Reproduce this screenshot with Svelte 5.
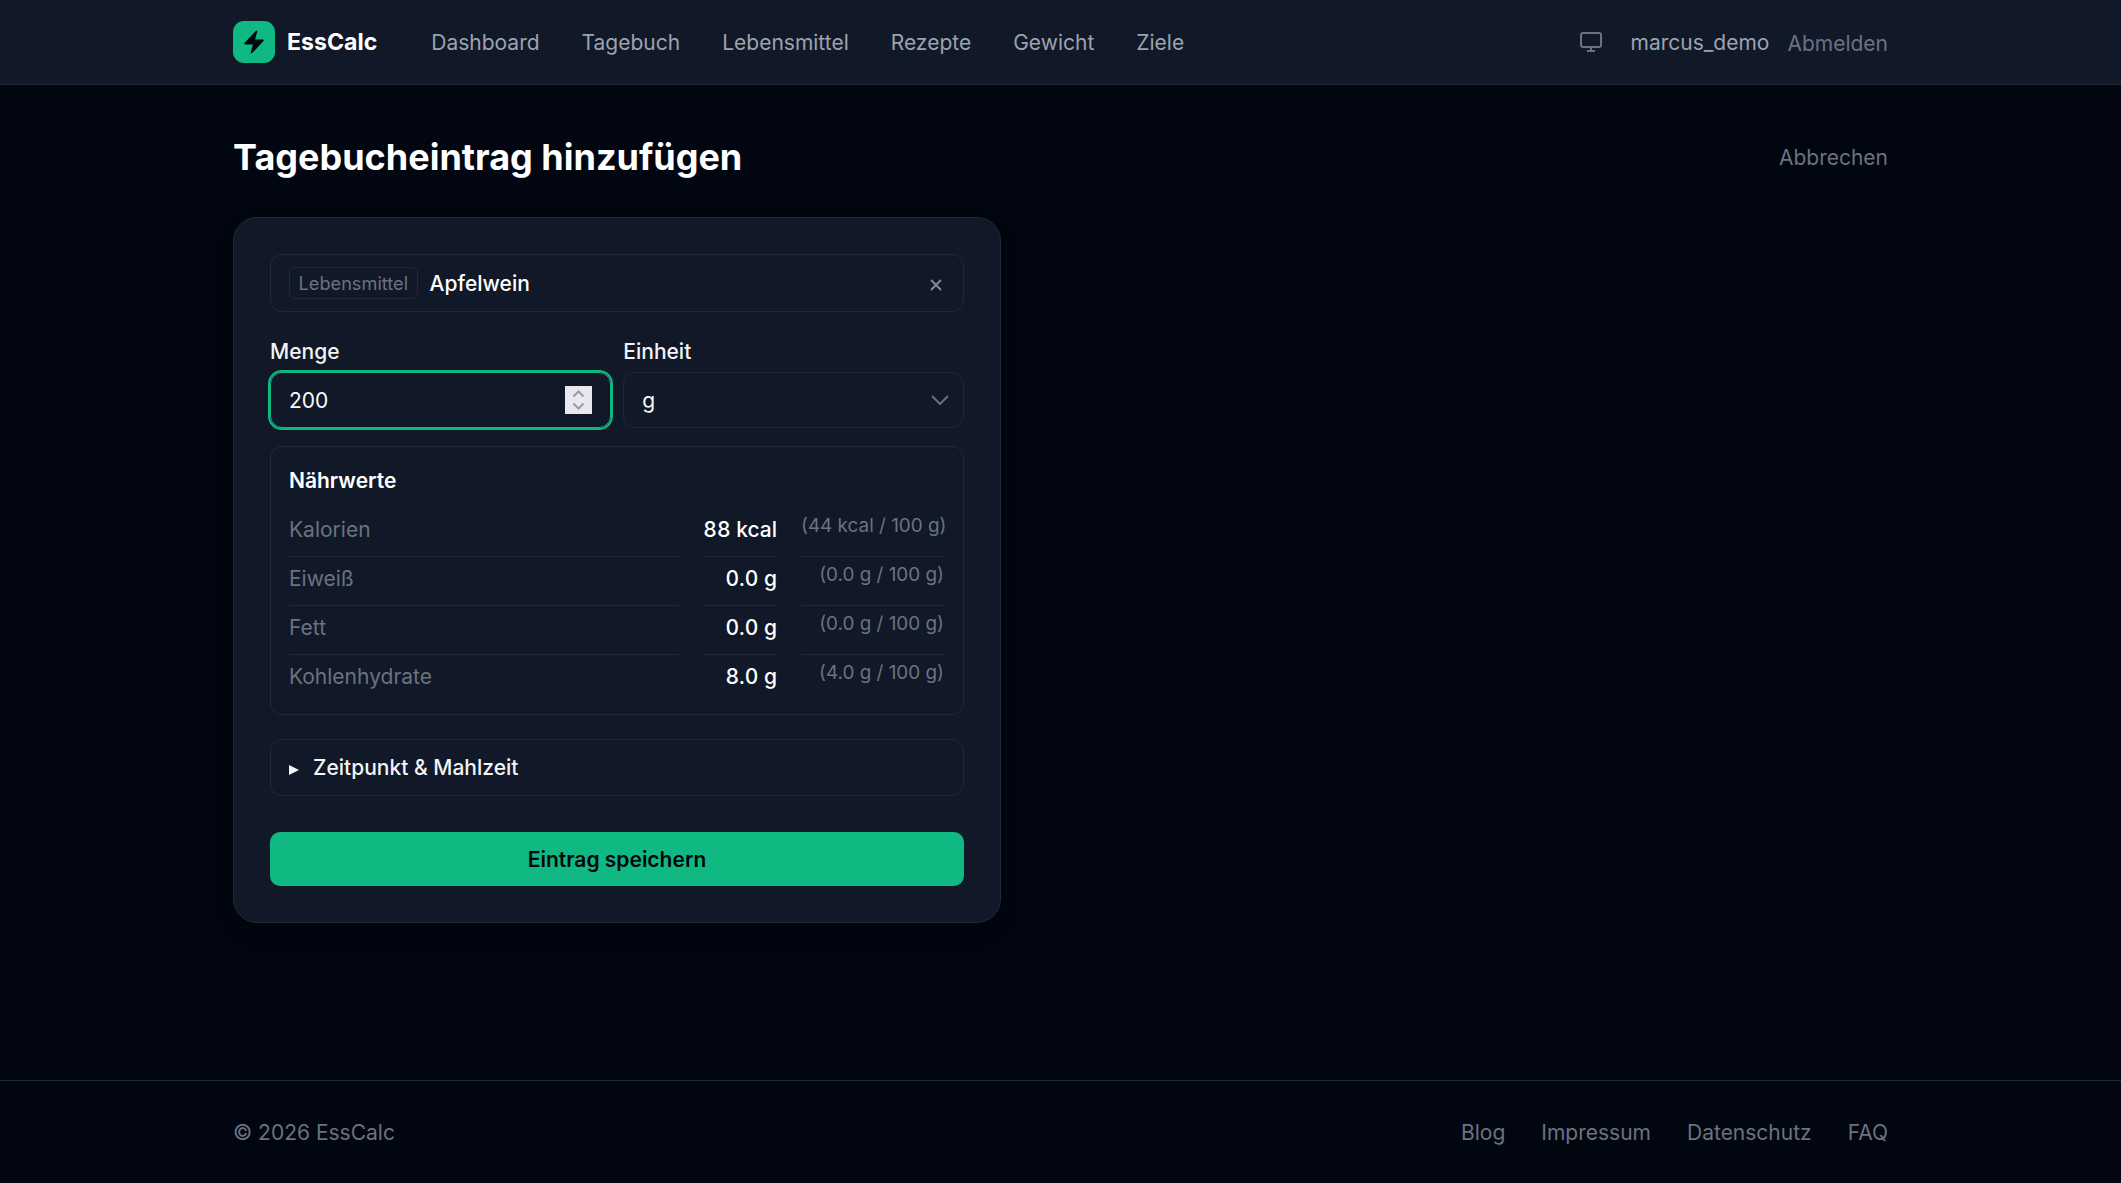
<script>
	const links = ['Dashboard', 'Tagebuch', 'Lebensmittel', 'Rezepte', 'Gewicht', 'Ziele']
	const footerLinks = ['Blog', 'Impressum', 'Datenschutz', 'FAQ']
	const nutrients = [
		{ name: 'Kalorien', value: '88 kcal', per100: '(44 kcal / 100 g)' },
		{ name: 'Eiweiß', value: '0.0 g', per100: '(0.0 g / 100 g)' },
		{ name: 'Fett', value: '0.0 g', per100: '(0.0 g / 100 g)' },
		{ name: 'Kohlenhydrate', value: '8.0 g', per100: '(4.0 g / 100 g)' }
	]
</script>

<div class="page">
	<header class="topbar">
		<div class="wrap topbar-inner">
			<a class="brand" href="#top">
				<span class="logo">
					<svg viewBox="0 0 24 24" width="26" height="26" fill="#020611">
						<path d="M14.615 1.595a.75.75 0 0 1 .359.852L12.982 9.75h7.268a.75.75 0 0 1 .548 1.262l-10.5 11.25a.75.75 0 0 1-1.272-.71l1.992-7.302H3.75a.75.75 0 0 1-.548-1.262l10.5-11.25a.75.75 0 0 1 .913-.143Z" />
					</svg>
				</span>
				<span class="brand-name">EssCalc</span>
			</a>
			<nav class="nav">
				{#each links as link}
					<a href="#top">{link}</a>
				{/each}
			</nav>
			<div class="user">
				<svg class="monitor" viewBox="0 0 22 20" width="22" height="20" fill="none" stroke="currentColor" stroke-width="2" stroke-linejoin="round">
					<rect x="1" y="1" width="20" height="14" rx="2" />
					<path d="M11 15v4M7 19h8" />
				</svg>
				<span class="username">marcus_demo</span>
				<a class="logout" href="#top">Abmelden</a>
			</div>
		</div>
	</header>

	<main class="wrap main">
		<div class="title-row">
			<h1>Tagebucheintrag hinzufügen</h1>
			<a class="cancel" href="#top">Abbrechen</a>
		</div>

		<section class="card">
			<div class="picked">
				<span class="chip">Lebensmittel</span>
				<span class="picked-name">Apfelwein</span>
				<svg class="clear" viewBox="0 0 12 12" width="12" height="12" fill="none" stroke="currentColor" stroke-width="2">
					<path d="M1 1l10 10M11 1L1 11" />
				</svg>
			</div>

			<div class="amount-grid">
				<div>
					<div class="label">Menge</div>
					<div class="field focused">
						<span>200</span>
						<span class="spin">
							<svg viewBox="0 0 27 28" width="27" height="28" fill="none" stroke="#9a9aab" stroke-width="2">
								<path d="M8.5 10.5l5-5 5 5M8.5 17.5l5 5 5-5" />
							</svg>
						</span>
					</div>
				</div>
				<div>
					<div class="label">Einheit</div>
					<div class="field">
						<span>g</span>
						<svg class="chevron" viewBox="0 0 18 10" width="18" height="10" fill="none" stroke="currentColor" stroke-width="1.9">
							<path d="M1 1l8 8 8-8" />
						</svg>
					</div>
				</div>
			</div>

			<div class="nutrition">
				<h2>Nährwerte</h2>
				<div class="nutrition-grid">
					{#each nutrients as n, i}
						<div class="cell name" class:last={i === nutrients.length - 1}>{n.name}</div>
						<div class="cell value" class:last={i === nutrients.length - 1}>{n.value}</div>
						<div class="cell per100" class:last={i === nutrients.length - 1}>{n.per100}</div>
					{/each}
				</div>
			</div>

			<details class="when">
				<summary>Zeitpunkt &amp; Mahlzeit</summary>
			</details>

			<button class="save" type="button">Eintrag speichern</button>
		</section>
	</main>

	<footer class="footer">
		<div class="wrap footer-inner">
			<span>© 2026 EssCalc</span>
			<div class="footer-links">
				{#each footerLinks as link}
					<a href="#top">{link}</a>
				{/each}
			</div>
		</div>
	</footer>
</div>

<style>
	:global(body) {
		margin: 0;
		background: #020611;
		font-family: Inter, "Liberation Sans", sans-serif;
		font-size: 21px;
		color: #f9fafb;
	}

	a {
		color: inherit;
		text-decoration: none;
	}

	.page {
		min-height: 100vh;
		display: flex;
		flex-direction: column;
	}

	.wrap {
		box-sizing: border-box;
		width: 100%;
		padding: 0 233px;
	}

	.topbar {
		height: 85px;
		box-sizing: border-box;
		background: #111827;
		border-bottom: 1px solid #1f2937;
	}

	.topbar-inner {
		height: 84px;
		display: flex;
		align-items: center;
	}

	.brand {
		display: flex;
		align-items: center;
		gap: 12px;
		margin-right: 54px;
	}

	.logo {
		width: 42px;
		height: 42px;
		border-radius: 11px;
		background: #10b981;
		display: flex;
		align-items: center;
		justify-content: center;
	}

	.brand-name {
		font-size: 23.1px;
		font-weight: 700;
		color: #fff;
	}

	.nav {
		display: flex;
		gap: 42px;
		color: #9ca3af;
	}

	.user {
		margin-left: auto;
		display: flex;
		align-items: center;
		color: #9ca3af;
	}

	.monitor {
		color: #6b7280;
		margin-right: 28px;
	}

	.username {
		margin-right: 18px;
	}

	.logout {
		margin-top: 2px;
		color: #6b7280;
	}

	.main {
		flex: 1;
	}

	.title-row {
		box-sizing: border-box;
		display: flex;
		align-items: center;
		justify-content: space-between;
		height: 132px;
		padding-top: 11px;
	}

	h1 {
		margin: 0;
		font-size: 36px;
		font-weight: 700;
		color: #fff;
	}

	.cancel {
		margin-top: 1px;
		color: #6b7280;
	}

	.card {
		box-sizing: border-box;
		width: 768px;
		padding: 36px;
		background: #111827;
		border: 1px solid #1f2937;
		border-radius: 24px;
		box-shadow: 0 10px 20px rgba(0, 0, 0, 0.3);
	}

	.picked {
		box-sizing: border-box;
		height: 58px;
		padding: 0 19px 0 18px;
		display: flex;
		align-items: center;
		border: 1px solid #1f2937;
		border-radius: 12px;
	}

	.chip {
		box-sizing: border-box;
		height: 32px;
		padding: 0 8.5px;
		display: flex;
		align-items: center;
		font-size: 18.2px;
		color: #6b7280;
		border: 1px solid #1f2937;
		border-radius: 6px;
	}

	.picked-name {
		margin-left: 12px;
		font-weight: 500;
		color: #fff;
	}

	.clear {
		margin-left: auto;
		margin-top: 4px;
		margin-right: 2px;
		color: #7f8796;
	}

	.amount-grid {
		display: grid;
		grid-template-columns: 1fr 1fr;
		gap: 12.6px;
		margin-top: 24px;
	}

	.label {
		height: 36px;
		font-weight: 500;
		line-height: 32px;
		color: #f3f4f6;
	}

	.field {
		box-sizing: border-box;
		height: 56px;
		padding: 0 18px;
		display: flex;
		align-items: center;
		justify-content: space-between;
		border: 1px solid #1f2937;
		border-radius: 12px;
	}

	.field.focused {
		border-color: #10b981;
		box-shadow: 0 0 0 2px #10b981;
	}

	.spin {
		width: 27px;
		height: 28px;
		background: #e8e8ed;
		display: flex;
	}

	.chevron {
		margin-right: -4px;
		color: #6b7280;
	}

	.nutrition {
		box-sizing: border-box;
		margin-top: 18px;
		height: 269px;
		padding: 18px 18px 0;
		border: 1px solid #1f2937;
		border-radius: 12px;
	}

	h2 {
		margin: 0 0 11px;
		font-size: 21px;
		font-weight: 600;
		line-height: 32px;
		color: #fff;
	}

	.nutrition-grid {
		display: grid;
		grid-template-columns: 1fr auto 144px;
		column-gap: 24px;
	}

	.cell {
		height: 49px;
		box-sizing: border-box;
		padding-top: 6px;
		line-height: 32px;
		border-bottom: 1px solid #1f2937;
	}

	.cell.last {
		border-bottom: 0;
	}

	.name {
		color: #6b7280;
	}

	.value {
		text-align: right;
		font-weight: 500;
		font-variant-numeric: tabular-nums;
		color: #fff;
	}

	.per100 {
		padding: 2px 1px 0 0;
		text-align: right;
		white-space: nowrap;
		font-size: 18.9px;
		color: #6b7280;
	}

	.when {
		box-sizing: border-box;
		height: 57px;
		margin-top: 24px;
		padding: 1px 18px 0;
		border: 1px solid #1f2937;
		border-radius: 12px;
	}

	summary {
		display: flex;
		align-items: center;
		gap: 14px;
		line-height: 54px;
		font-weight: 500;
		color: #f3f4f6;
		list-style: none;
	}

	summary::before {
		content: '';
		margin-top: 3px;
		border-left: 10px solid #f3f4f6;
		border-top: 5px solid transparent;
		border-bottom: 5px solid transparent;
	}

	.save {
		display: block;
		width: 100%;
		height: 54px;
		margin-top: 36px;
		border: 0;
		border-radius: 10px;
		background: #10b981;
		font: inherit;
		font-weight: 600;
		color: #020611;
	}

	.footer {
		height: 103px;
		box-sizing: border-box;
		border-top: 1px solid #1f2937;
		color: #6b7280;
	}

	.footer-inner {
		height: 102px;
		display: flex;
		align-items: center;
		justify-content: space-between;
	}

	.footer-links {
		display: flex;
		gap: 36px;
	}
</style>
